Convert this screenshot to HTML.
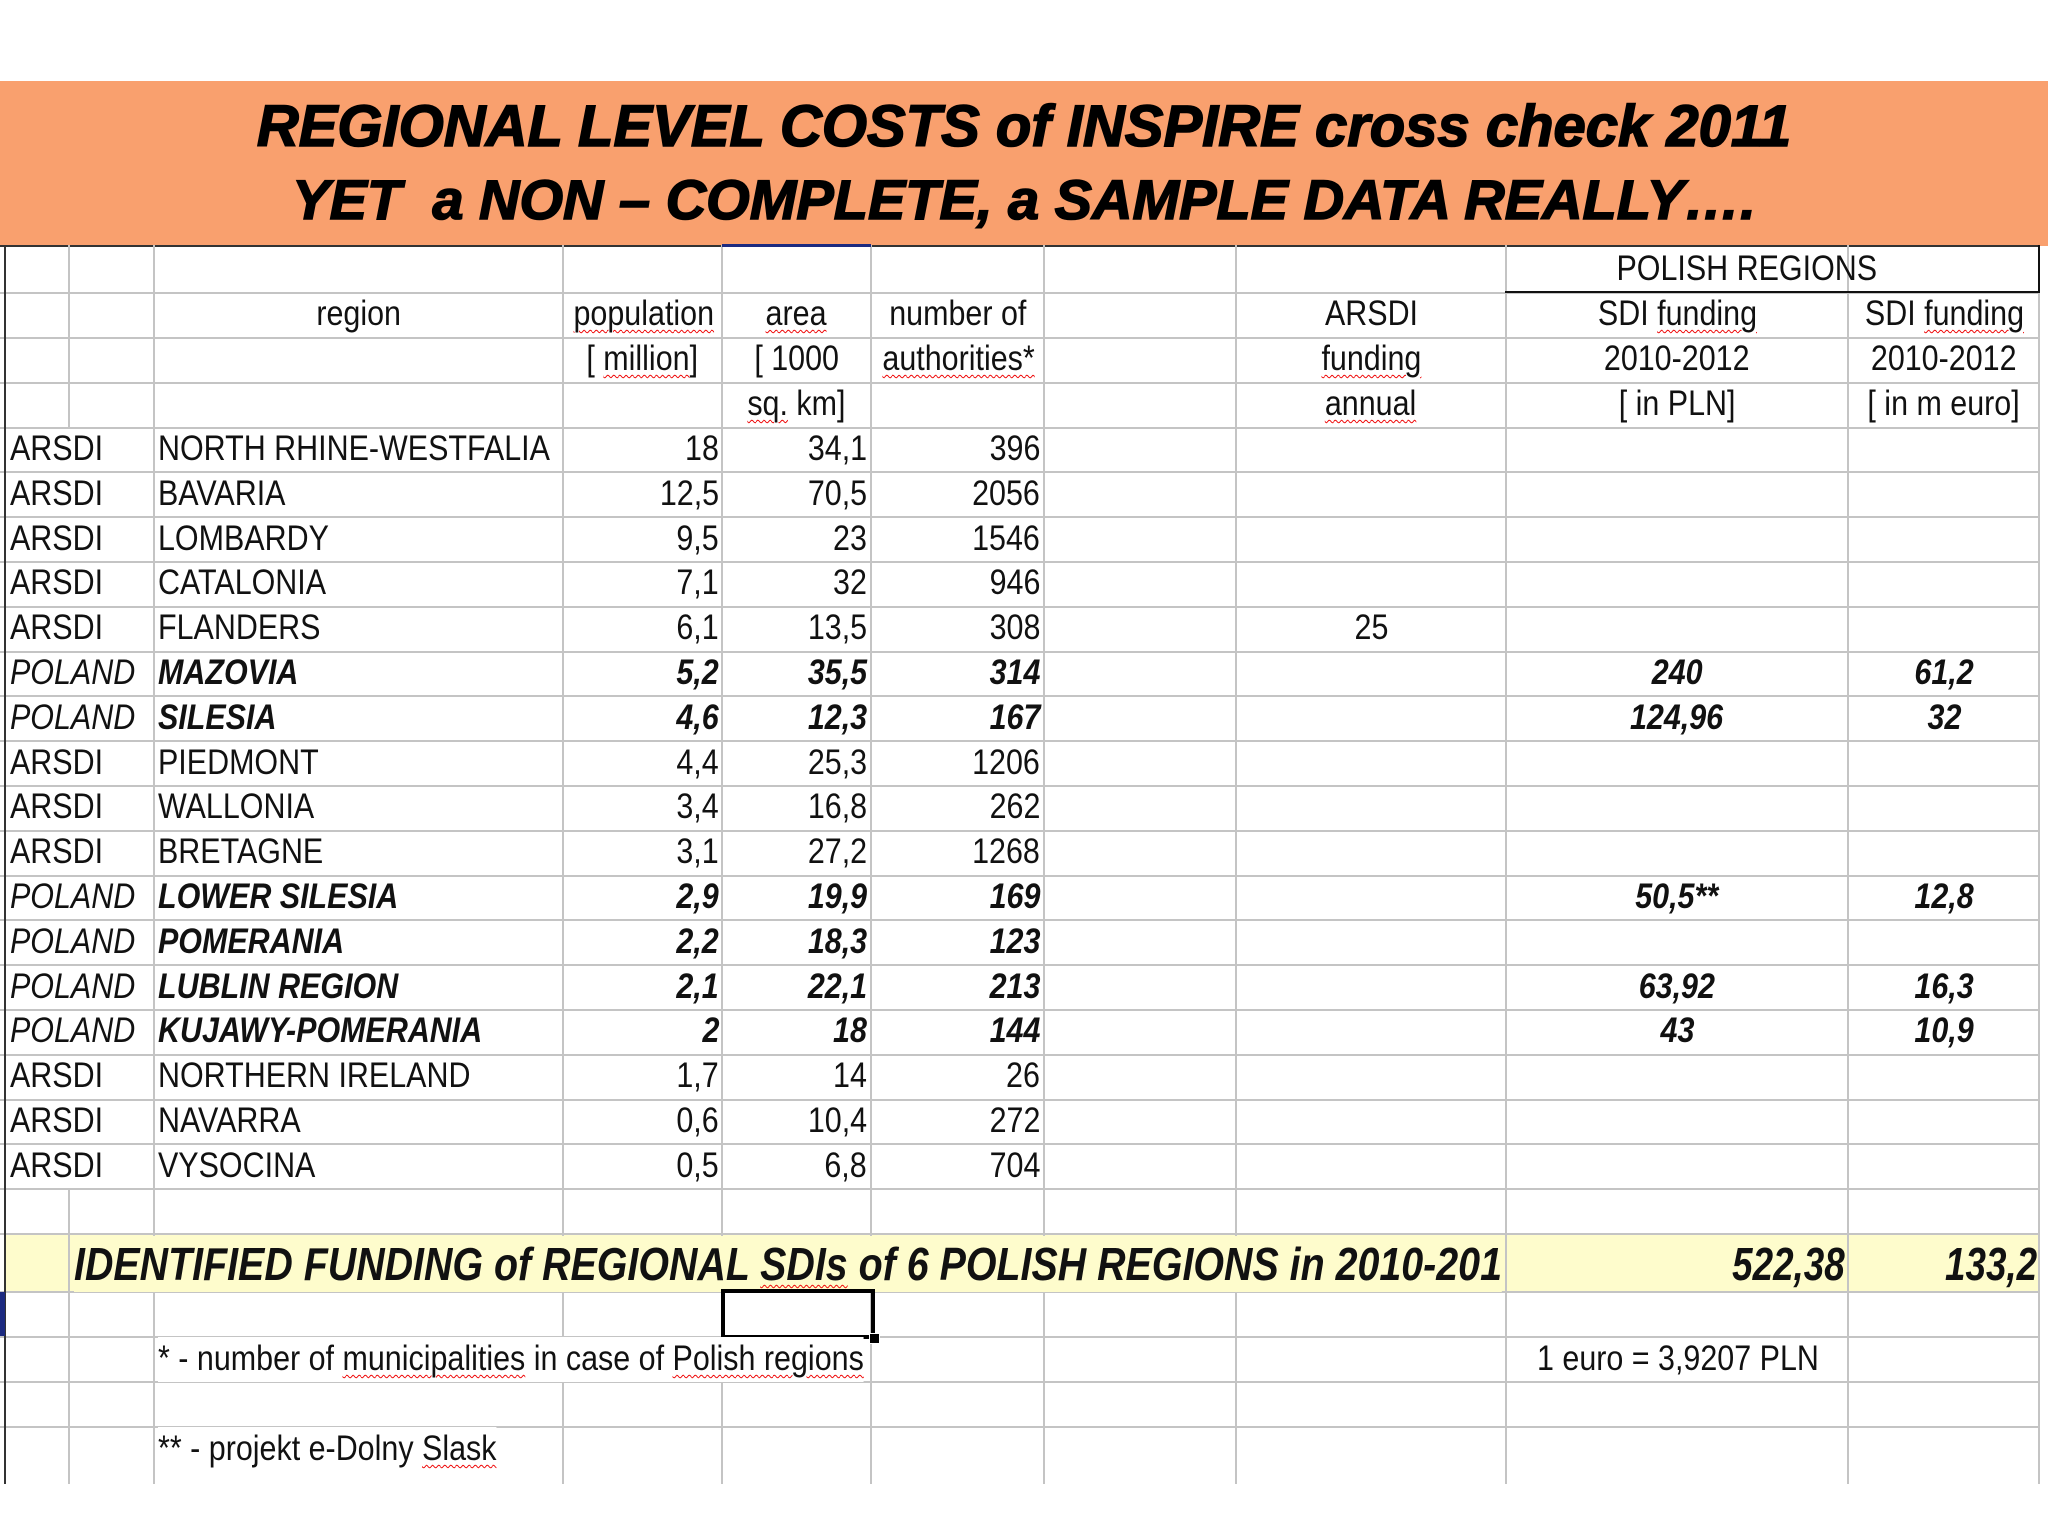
<!DOCTYPE html>
<html><head><meta charset="utf-8"><style>
*{margin:0;padding:0;box-sizing:border-box}
body{width:2048px;height:1536px;background:#fff;position:relative;overflow:hidden;font-family:"Liberation Sans",Arial,sans-serif;color:#111}
.band{position:absolute;left:0;top:81px;width:2048px;height:165px;background:#F9A06E}
.title{position:absolute;left:0;width:2048px;text-align:center;font-weight:bold;font-style:italic;font-size:56px;color:#000;white-space:nowrap;-webkit-text-stroke:1.6px #000}
.h{position:absolute;left:0;width:2040px;height:2px;background:#c4c4c4}
.v{position:absolute;width:2px;background:#c4c4c4}
.t{position:absolute;height:44.8px;line-height:44.8px;font-size:35px;white-space:nowrap}
.t span{display:inline-block;transform:scaleX(.87)}
.L span{transform-origin:left center}
.R{text-align:right}.R span{transform-origin:right center}
.C{text-align:center}.C span{transform-origin:center center}
.b{font-weight:bold;font-style:italic}
.i{font-style:italic}
.w{text-decoration:underline wavy #e00;text-decoration-thickness:1px;text-underline-offset:4px}
</style></head><body>
<div class="band"></div>
<div class="title" style="top:96px;line-height:62px;font-size:58px">REGIONAL LEVEL COSTS of INSPIRE cross check 2011</div>
<div class="title" style="top:169px;line-height:62px">YET&nbsp; a NON – COMPLETE, a SAMPLE DATA REALLY….</div>

<div style="position:absolute;left:5px;top:1234px;width:2035px;height:58px;background:#FEFCCC"></div>

<div class="h" style="top:245px;background:#333"></div>
<div class="h" style="top:292px"></div><div class="h" style="top:337px"></div><div class="h" style="top:382px"></div>
<div class="h" style="top:427px"></div><div class="h" style="top:471px"></div><div class="h" style="top:516px"></div>
<div class="h" style="top:561px"></div><div class="h" style="top:606px"></div><div class="h" style="top:651px"></div>
<div class="h" style="top:695px"></div><div class="h" style="top:740px"></div><div class="h" style="top:785px"></div>
<div class="h" style="top:830px"></div><div class="h" style="top:875px"></div><div class="h" style="top:919px"></div>
<div class="h" style="top:964px"></div><div class="h" style="top:1009px"></div><div class="h" style="top:1054px"></div>
<div class="h" style="top:1099px"></div><div class="h" style="top:1143px"></div><div class="h" style="top:1188px"></div>
<div class="h" style="top:1233px"></div><div class="h" style="top:1291px"></div><div class="h" style="top:1336px"></div>
<div class="h" style="top:1381px"></div><div class="h" style="top:1426px"></div>

<div class="v" style="left:4px;top:245px;height:1239px;background:#333"></div>
<div class="v" style="left:0px;top:1292px;height:44px;width:5px;background:#1c2a80"></div>
<div class="v" style="left:68px;top:245px;height:182px"></div>
<div class="v" style="left:68px;top:1188px;height:296px"></div>
<div class="v" style="left:153px;top:245px;height:1239px"></div>
<div class="v" style="left:562px;top:245px;height:1239px"></div>
<div class="v" style="left:721px;top:245px;height:1239px"></div>
<div class="v" style="left:870px;top:245px;height:1239px"></div>
<div class="v" style="left:1043px;top:245px;height:1239px"></div>
<div class="v" style="left:1235px;top:245px;height:1239px"></div>
<div class="v" style="left:1505px;top:245px;height:1239px"></div>
<div class="v" style="left:1847px;top:245px;height:1239px"></div>
<div class="v" style="left:2038px;top:245px;height:1239px"></div>
<div style="position:absolute;left:722px;top:244px;width:149px;height:3px;background:#1c2a80"></div>

<div style="position:absolute;left:1505px;top:245px;width:535px;height:48px;border:2px solid #111;border-left:none;border-top:none"></div>
<div class="t C" style="left:1480px;width:534px;top:247px"><span>POLISH REGIONS</span></div>

<div class="t C" style="left:154px;width:409px;top:292px"><span>region</span></div>
<div class="t C" style="left:563px;width:159px;top:292px"><span class="w">population</span></div>
<div class="t C" style="left:722px;width:149px;top:292px"><span class="w">area</span></div>
<div class="t C" style="left:871px;width:173px;top:292px"><span>number of</span></div>
<div class="t C" style="left:1236px;width:270px;top:292px"><span>ARSDI</span></div>
<div class="t C" style="left:1506px;width:342px;top:292px"><span>SDI <u class="w" style="text-decoration-line:underline">funding</u></span></div>
<div class="t C" style="left:1848px;width:192px;top:292px"><span>SDI <u class="w" style="text-decoration-line:underline">funding</u></span></div>
<div class="t C" style="left:563px;width:159px;top:337px"><span>[ <u class="w" style="text-decoration-line:underline">million</u>]</span></div>
<div class="t C" style="left:722px;width:149px;top:337px"><span>[ 1000</span></div>
<div class="t C" style="left:871px;width:173px;top:337px"><span class="w">authorities*</span></div>
<div class="t C" style="left:1236px;width:270px;top:337px"><span class="w">funding</span></div>
<div class="t C" style="left:1506px;width:342px;top:337px"><span>2010-2012</span></div>
<div class="t C" style="left:1848px;width:192px;top:337px"><span>2010-2012</span></div>
<div class="t C" style="left:722px;width:149px;top:382px"><span><u class="w" style="text-decoration-line:underline">sq.</u> km]</span></div>
<div class="t C" style="left:1236px;width:270px;top:382px"><span class="w">annual</span></div>
<div class="t C" style="left:1506px;width:342px;top:382px"><span>[ in PLN]</span></div>
<div class="t C" style="left:1848px;width:192px;top:382px"><span>[ in m euro]</span></div>

<div class="t L" style="left:10px;top:427px"><span>ARSDI</span></div><div class="t L" style="left:158px;top:427px"><span>NORTH RHINE-WESTFALIA</span></div>
<div class="t R" style="left:563px;width:156px;top:427px"><span>18</span></div><div class="t R" style="left:722px;width:145px;top:427px"><span>34,1</span></div><div class="t R" style="left:871px;width:169px;top:427px"><span>396</span></div>

<div class="t L" style="left:10px;top:472px"><span>ARSDI</span></div><div class="t L" style="left:158px;top:472px"><span>BAVARIA</span></div>
<div class="t R" style="left:563px;width:156px;top:472px"><span>12,5</span></div><div class="t R" style="left:722px;width:145px;top:472px"><span>70,5</span></div><div class="t R" style="left:871px;width:169px;top:472px"><span>2056</span></div>

<div class="t L" style="left:10px;top:517px"><span>ARSDI</span></div><div class="t L" style="left:158px;top:517px"><span>LOMBARDY</span></div>
<div class="t R" style="left:563px;width:156px;top:517px"><span>9,5</span></div><div class="t R" style="left:722px;width:145px;top:517px"><span>23</span></div><div class="t R" style="left:871px;width:169px;top:517px"><span>1546</span></div>

<div class="t L" style="left:10px;top:561px"><span>ARSDI</span></div><div class="t L" style="left:158px;top:561px"><span>CATALONIA</span></div>
<div class="t R" style="left:563px;width:156px;top:561px"><span>7,1</span></div><div class="t R" style="left:722px;width:145px;top:561px"><span>32</span></div><div class="t R" style="left:871px;width:169px;top:561px"><span>946</span></div>

<div class="t L" style="left:10px;top:606px"><span>ARSDI</span></div><div class="t L" style="left:158px;top:606px"><span>FLANDERS</span></div>
<div class="t R" style="left:563px;width:156px;top:606px"><span>6,1</span></div><div class="t R" style="left:722px;width:145px;top:606px"><span>13,5</span></div><div class="t R" style="left:871px;width:169px;top:606px"><span>308</span></div>
<div class="t C" style="left:1236px;width:270px;top:606px"><span>25</span></div>

<div class="t L i" style="left:10px;top:651px"><span>POLAND</span></div><div class="t L b" style="left:158px;top:651px"><span>MAZOVIA</span></div>
<div class="t R b" style="left:563px;width:156px;top:651px"><span>5,2</span></div><div class="t R b" style="left:722px;width:145px;top:651px"><span>35,5</span></div><div class="t R b" style="left:871px;width:169px;top:651px"><span>314</span></div>
<div class="t C b" style="left:1506px;width:342px;top:651px"><span>240</span></div><div class="t C b" style="left:1848px;width:192px;top:651px"><span>61,2</span></div>

<div class="t L i" style="left:10px;top:696px"><span>POLAND</span></div><div class="t L b" style="left:158px;top:696px"><span>SILESIA</span></div>
<div class="t R b" style="left:563px;width:156px;top:696px"><span>4,6</span></div><div class="t R b" style="left:722px;width:145px;top:696px"><span>12,3</span></div><div class="t R b" style="left:871px;width:169px;top:696px"><span>167</span></div>
<div class="t C b" style="left:1506px;width:342px;top:696px"><span>124,96</span></div><div class="t C b" style="left:1848px;width:192px;top:696px"><span>32</span></div>

<div class="t L" style="left:10px;top:741px"><span>ARSDI</span></div><div class="t L" style="left:158px;top:741px"><span>PIEDMONT</span></div>
<div class="t R" style="left:563px;width:156px;top:741px"><span>4,4</span></div><div class="t R" style="left:722px;width:145px;top:741px"><span>25,3</span></div><div class="t R" style="left:871px;width:169px;top:741px"><span>1206</span></div>

<div class="t L" style="left:10px;top:785px"><span>ARSDI</span></div><div class="t L" style="left:158px;top:785px"><span>WALLONIA</span></div>
<div class="t R" style="left:563px;width:156px;top:785px"><span>3,4</span></div><div class="t R" style="left:722px;width:145px;top:785px"><span>16,8</span></div><div class="t R" style="left:871px;width:169px;top:785px"><span>262</span></div>

<div class="t L" style="left:10px;top:830px"><span>ARSDI</span></div><div class="t L" style="left:158px;top:830px"><span>BRETAGNE</span></div>
<div class="t R" style="left:563px;width:156px;top:830px"><span>3,1</span></div><div class="t R" style="left:722px;width:145px;top:830px"><span>27,2</span></div><div class="t R" style="left:871px;width:169px;top:830px"><span>1268</span></div>

<div class="t L i" style="left:10px;top:875px"><span>POLAND</span></div><div class="t L b" style="left:158px;top:875px"><span>LOWER SILESIA</span></div>
<div class="t R b" style="left:563px;width:156px;top:875px"><span>2,9</span></div><div class="t R b" style="left:722px;width:145px;top:875px"><span>19,9</span></div><div class="t R b" style="left:871px;width:169px;top:875px"><span>169</span></div>
<div class="t C b" style="left:1506px;width:342px;top:875px"><span>50,5**</span></div><div class="t C b" style="left:1848px;width:192px;top:875px"><span>12,8</span></div>

<div class="t L i" style="left:10px;top:920px"><span>POLAND</span></div><div class="t L b" style="left:158px;top:920px"><span>POMERANIA</span></div>
<div class="t R b" style="left:563px;width:156px;top:920px"><span>2,2</span></div><div class="t R b" style="left:722px;width:145px;top:920px"><span>18,3</span></div><div class="t R b" style="left:871px;width:169px;top:920px"><span>123</span></div>

<div class="t L i" style="left:10px;top:965px"><span>POLAND</span></div><div class="t L b" style="left:158px;top:965px"><span>LUBLIN REGION</span></div>
<div class="t R b" style="left:563px;width:156px;top:965px"><span>2,1</span></div><div class="t R b" style="left:722px;width:145px;top:965px"><span>22,1</span></div><div class="t R b" style="left:871px;width:169px;top:965px"><span>213</span></div>
<div class="t C b" style="left:1506px;width:342px;top:965px"><span>63,92</span></div><div class="t C b" style="left:1848px;width:192px;top:965px"><span>16,3</span></div>

<div class="t L i" style="left:10px;top:1009px"><span>POLAND</span></div><div class="t L b" style="left:158px;top:1009px"><span>KUJAWY-POMERANIA</span></div>
<div class="t R b" style="left:563px;width:156px;top:1009px"><span>2</span></div><div class="t R b" style="left:722px;width:145px;top:1009px"><span>18</span></div><div class="t R b" style="left:871px;width:169px;top:1009px"><span>144</span></div>
<div class="t C b" style="left:1506px;width:342px;top:1009px"><span>43</span></div><div class="t C b" style="left:1848px;width:192px;top:1009px"><span>10,9</span></div>

<div class="t L" style="left:10px;top:1054px"><span>ARSDI</span></div><div class="t L" style="left:158px;top:1054px"><span>NORTHERN IRELAND</span></div>
<div class="t R" style="left:563px;width:156px;top:1054px"><span>1,7</span></div><div class="t R" style="left:722px;width:145px;top:1054px"><span>14</span></div><div class="t R" style="left:871px;width:169px;top:1054px"><span>26</span></div>

<div class="t L" style="left:10px;top:1099px"><span>ARSDI</span></div><div class="t L" style="left:158px;top:1099px"><span>NAVARRA</span></div>
<div class="t R" style="left:563px;width:156px;top:1099px"><span>0,6</span></div><div class="t R" style="left:722px;width:145px;top:1099px"><span>10,4</span></div><div class="t R" style="left:871px;width:169px;top:1099px"><span>272</span></div>

<div class="t L" style="left:10px;top:1144px"><span>ARSDI</span></div><div class="t L" style="left:158px;top:1144px"><span>VYSOCINA</span></div>
<div class="t R" style="left:563px;width:156px;top:1144px"><span>0,5</span></div><div class="t R" style="left:722px;width:145px;top:1144px"><span>6,8</span></div><div class="t R" style="left:871px;width:169px;top:1144px"><span>704</span></div>

<div class="t L b" style="left:74px;top:1236px;height:56px;line-height:56px;font-size:46px"><span style="background:#FEFCCC;transform:scaleX(.856)">IDENTIFIED FUNDING of REGIONAL <u class="w" style="text-decoration-line:underline">SDIs</u> of 6 POLISH REGIONS in 2010-201</span></div>
<div class="t R b" style="left:1506px;width:339px;top:1236px;height:56px;line-height:56px;font-size:46px"><span style="transform:scaleX(.8)">522,38</span></div>
<div class="t R b" style="left:1848px;width:189px;top:1236px;height:56px;line-height:56px;font-size:46px"><span style="transform:scaleX(.8)">133,2</span></div>

<div style="position:absolute;left:721px;top:1289px;width:154px;height:50px;border:4px solid #000"></div>
<div style="position:absolute;left:869px;top:1333px;width:11px;height:11px;background:#000;border:1px solid #fff"></div>

<div class="t L" style="left:158px;top:1337px"><span style="background:#fff">* - number of <u class="w" style="text-decoration-line:underline">municipalities</u> in case of <u class="w" style="text-decoration-line:underline">Polish regions</u></span></div>
<div class="t L" style="left:1537px;top:1337px"><span>1 euro = 3,9207 PLN</span></div>
<div class="t L" style="left:158px;top:1427px"><span style="background:#fff">** - projekt e-Dolny <u class="w" style="text-decoration-line:underline">Slask</u></span></div>
</body></html>
